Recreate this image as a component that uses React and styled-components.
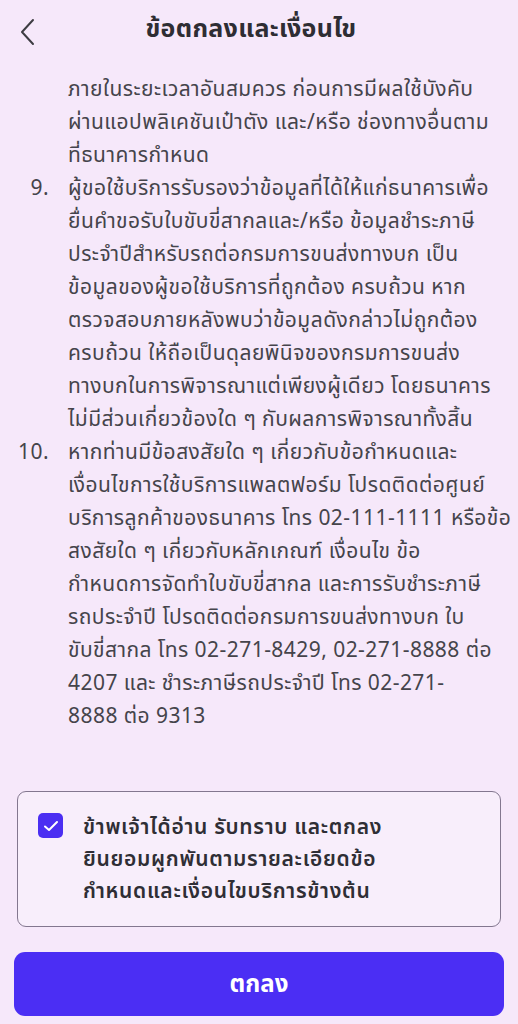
import React from "react";
import styled, { createGlobalStyle } from "styled-components";

const GlobalStyle = createGlobalStyle`
  html, body {
    margin: 0;
    padding: 0;
    background: #f6e8fa;
  }
  body {
    font-family: "Noto Sans", "Noto Sans Thai", "Noto Sans Thai Looped", Tahoma, sans-serif;
    color: #3b3a40;
  }
`;

const Screen = styled.div`
  width: 518px;
  height: 1024px;
  display: flex;
  flex-direction: column;
  background: #f6e8fa;
  overflow: hidden;
`;

const Header = styled.div`
  height: 72px;
  flex-shrink: 0;
  display: flex;
  align-items: flex-start;
`;

const BackButton = styled.button`
  border: none;
  background: none;
  padding: 0;
  margin: 17px 0 0 16px;
  width: 24px;
  height: 30px;
  display: flex;
  align-items: center;
  justify-content: center;
  cursor: pointer;
`;

const Title = styled.h1`
  margin: 9px 0 0 0;
  flex: 1;
  text-align: center;
  padding-right: 56px;
  font-size: 25px;
  font-weight: 700;
  letter-spacing: 0.3px;
  line-height: 36px;
  color: #2e2d33;
`;

const Scroll = styled.div`
  flex: 1;
  overflow: hidden;
`;

const Content = styled.div`
  padding: 0 16px 0 14px;
  font-size: 21px;
  letter-spacing: 0.45px;
  line-height: 33px;
  color: #45444b;
`;

const Item = styled.div`
  display: flex;
  gap: 19px;
`;

const Num = styled.div`
  width: 35px;
  text-align: right;
  flex-shrink: 0;
`;

const Lines = styled.div`
  flex: 1;
`;

const Line = styled.div`
  white-space: nowrap;
`;

const Footer = styled.div`
  flex-shrink: 0;
  padding: 0 14px 8px;
  display: flex;
  flex-direction: column;
  gap: 25px;
`;

const ConsentCard = styled.label`
  margin: 0 3px;
  border: 1.5px solid #83778f;
  border-radius: 9px;
  background: #f8eefb;
  padding: 18px 20px 20px 20px;
  display: flex;
  gap: 20px;
  cursor: pointer;
`;

const Box = styled.span`
  width: 25px;
  height: 25px;
  border-radius: 5px;
  background: #4b2ef2;
  flex-shrink: 0;
  display: flex;
  align-items: center;
  justify-content: center;
  margin-top: 3px;
`;

const ConsentText = styled.div`
  font-size: 21px;
  font-weight: 600;
  letter-spacing: 0.7px;
  line-height: 32px;
  color: #2f2e35;
`;

const SubmitButton = styled.button`
  height: 64px;
  border: none;
  border-radius: 11px;
  background: #4b2ef4;
  color: #ffffff;
  font-family: inherit;
  font-size: 24px;
  font-weight: 700;
  cursor: pointer;
`;

const intro = [
  "ภายในระยะเวลาอันสมควร ก่อนการมีผลใช้บังคับ",
  "ผ่านแอปพลิเคชันเป๋าตัง และ/หรือ ช่องทางอื่นตาม",
  "ที่ธนาคารกำหนด",
];

const items = [
  {
    n: "9.",
    lines: [
      "ผู้ขอใช้บริการรับรองว่าข้อมูลที่ได้ให้แก่ธนาคารเพื่อ",
      "ยื่นคำขอรับใบขับขี่สากลและ/หรือ ข้อมูลชำระภาษี",
      "ประจำปีสำหรับรถต่อกรมการขนส่งทางบก เป็น",
      "ข้อมูลของผู้ขอใช้บริการที่ถูกต้อง ครบถ้วน หาก",
      "ตรวจสอบภายหลังพบว่าข้อมูลดังกล่าวไม่ถูกต้อง",
      "ครบถ้วน ให้ถือเป็นดุลยพินิจของกรมการขนส่ง",
      "ทางบกในการพิจารณาแต่เพียงผู้เดียว โดยธนาคาร",
      "ไม่มีส่วนเกี่ยวข้องใด ๆ กับผลการพิจารณาทั้งสิ้น",
    ],
  },
  {
    n: "10.",
    lines: [
      "หากท่านมีข้อสงสัยใด ๆ เกี่ยวกับข้อกำหนดและ",
      "เงื่อนไขการใช้บริการแพลตฟอร์ม โปรดติดต่อศูนย์",
      "บริการลูกค้าของธนาคาร โทร 02-111-1111 หรือข้อ",
      "สงสัยใด ๆ เกี่ยวกับหลักเกณฑ์ เงื่อนไข ข้อ",
      "กำหนดการจัดทำใบขับขี่สากล และการรับชำระภาษี",
      "รถประจำปี โปรดติดต่อกรมการขนส่งทางบก ใบ",
      "ขับขี่สากล โทร 02-271-8429, 02-271-8888 ต่อ",
      "4207 และ ชำระภาษีรถประจำปี โทร 02-271-",
      "8888 ต่อ 9313",
    ],
  },
];

const consent = [
  "ข้าพเจ้าได้อ่าน รับทราบ และตกลง",
  "ยินยอมผูกพันตามรายละเอียดข้อ",
  "กำหนดและเงื่อนไขบริการข้างต้น",
];

function App() {
  return (
    <Screen>
      <GlobalStyle />
      <Header>
        <BackButton aria-label="back">
          <svg width="16" height="28" viewBox="0 0 16 28" fill="none">
            <polyline
              points="13,2 2,14 13,26"
              stroke="#3d3c42"
              strokeWidth="2"
              strokeLinecap="round"
              strokeLinejoin="round"
            />
          </svg>
        </BackButton>
        <Title>ข้อตกลงและเงื่อนไข</Title>
      </Header>
      <Scroll>
        <Content>
          <Item>
            <Num />
            <Lines>
              {intro.map((l) => (
                <Line key={l}>{l}</Line>
              ))}
            </Lines>
          </Item>
          {items.map((it) => (
            <Item key={it.n}>
              <Num>{it.n}</Num>
              <Lines>
                {it.lines.map((l) => (
                  <Line key={l}>{l}</Line>
                ))}
              </Lines>
            </Item>
          ))}
        </Content>
      </Scroll>
      <Footer>
        <ConsentCard>
          <Box>
            <svg width="16" height="12" viewBox="0 0 16 12" fill="none">
              <polyline
                points="2,6.5 6,10 14,2"
                stroke="#ffffff"
                strokeWidth="2"
                strokeLinecap="round"
                strokeLinejoin="round"
              />
            </svg>
          </Box>
          <ConsentText>
            {consent.map((l) => (
              <Line key={l}>{l}</Line>
            ))}
          </ConsentText>
        </ConsentCard>
        <SubmitButton>ตกลง</SubmitButton>
      </Footer>
    </Screen>
  );
}

export default App;
